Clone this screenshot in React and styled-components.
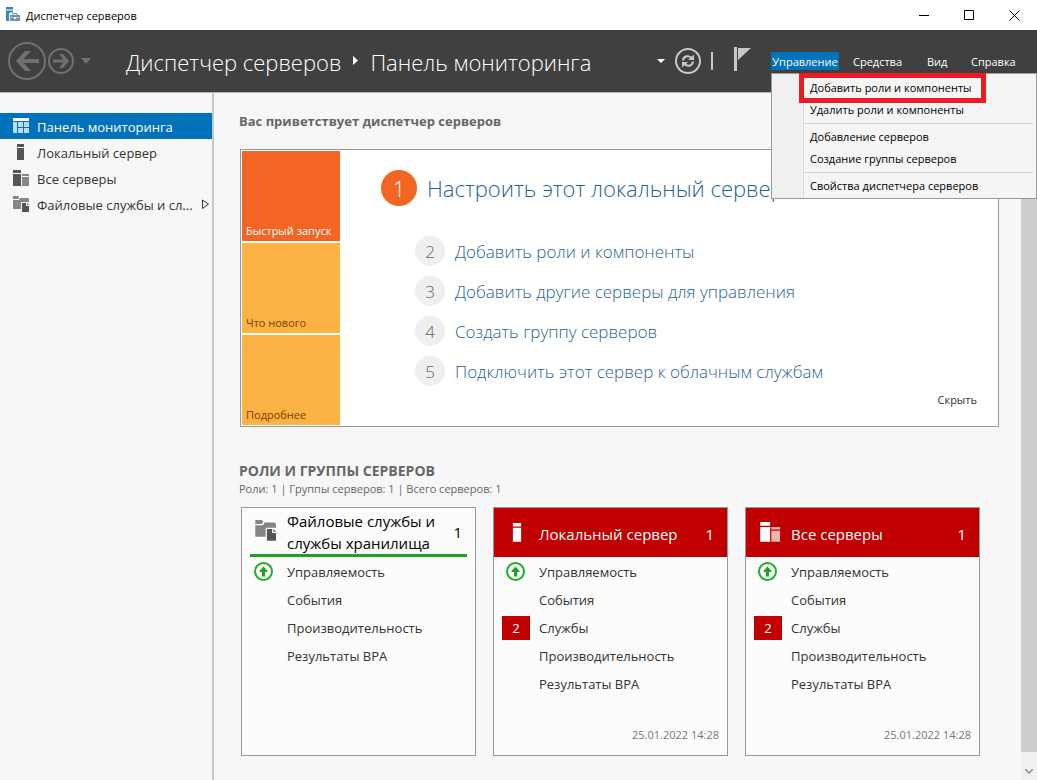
import React, { useState } from 'react';
import styled, { createGlobalStyle, css } from 'styled-components';

const GlobalStyle = createGlobalStyle`
  *, *::before, *::after {
    box-sizing: border-box;
  }

  body {
    margin: 0;
    background: #f7f7f7;
    color: #333;
    font-family: 'Open Sans', 'Noto Sans', sans-serif;
    font-size: 13px;
  }

  button {
    margin: 0;
    padding: 0;
    border: 0;
    background: none;
    color: inherit;
    font: inherit;
    cursor: pointer;
  }

  a {
    color: inherit;
    text-decoration: none;
  }

  h1, h2, h3, p, ul, ol {
    margin: 0;
    padding: 0;
    list-style: none;
    font-size: inherit;
    font-weight: normal;
  }

  svg {
    display: block;
    flex: none;
  }
`;

const Window = styled.div`
  display: flex;
  flex-direction: column;
  min-height: 100vh;
`;

const TitleBar = styled.div`
  display: flex;
  align-items: center;
  height: 30px;
  padding-left: 5px;
  background: #fff;
  color: #000;
  font-size: 11px;
`;

const TitleText = styled.span`
  flex: 1;
  padding-left: 5px;
`;

const WindowButton = styled.button`
  display: flex;
  align-items: center;
  justify-content: center;
  width: 45px;
  height: 28px;
`;

const Header = styled.header`
  display: flex;
  align-items: center;
  height: 63px;
  padding: 0 20px 0 8px;
  background: #404040;
  border-bottom: 1px solid #b5b5b5;
  color: #fff;
`;

const History = styled.div`
  display: flex;
  align-items: center;
  gap: 2px;
  width: 118px;
`;

const HistoryToggle = styled.button`
  padding: 0 5px;
`;

const Crumbs = styled.h1`
  display: flex;
  flex: 1;
  align-items: center;
  gap: 11px;
  padding-top: 2px;
  font-size: 22px;
  font-weight: 300;
  white-space: nowrap;
`;

const HeaderTools = styled.div`
  display: flex;
  align-items: center;
  gap: 10px;
  margin-right: 20px;
`;

const Divider = styled.span`
  width: 2px;
  height: 18px;
  margin-right: 10px;
  background: #c8c8c8;
`;

const MenuBar = styled.nav`
  display: grid;
  grid-template-columns: 82px 74px 44px 46px;
  font-size: 11px;
`;

const MenuGroup = styled.div`
  position: relative;
`;

const MenuButton = styled.button`
  height: 18px;
  line-height: 20px;
  text-align: left;
  white-space: nowrap;

  ${({ $open }) => $open && css`
    width: 68px;
    background: #0072bc;
    text-align: center;
  `}
`;

const Dropdown = styled.ul`
  position: absolute;
  z-index: 2;
  top: 21px;
  left: 0;
  width: 266px;
  padding: 3px 3px 1px 0;
  border: 1px solid #999;
  background: linear-gradient(90deg, #f0f0f0 31px, #d9d9d9 31px, #d9d9d9 32px, #f5f5f5 32px);
  color: #000;
`;

const DropdownItem = styled.li`
  position: relative;
  height: 22px;
  padding-left: 38px;
  line-height: 22px;

  ${({ $marked }) => $marked && css`
    &::after {
      content: '';
      position: absolute;
      z-index: 1;
      top: -4px;
      left: 27px;
      width: 187px;
      height: 30px;
      border: 5px solid #ed1c24;
      pointer-events: none;
    }
  `}
`;

const Separator = styled.li`
  height: 1px;
  margin: 2px 0 2px 33px;
  background: #d4d4d4;
`;

const Body = styled.div`
  display: grid;
  flex: 1;
  grid-template-columns: 214px minmax(0, 1fr) 16px;
`;

const Sidebar = styled.nav`
  padding-top: 20px;
  border-right: 2px solid #c8c8c8;
`;

const SideLink = styled.a`
  display: flex;
  align-items: center;
  gap: 8px;
  height: 26px;
  padding: 0 4px 0 12px;
  background: ${({ $active }) => ($active ? '#0072bc' : 'transparent')};
  color: ${({ $active }) => ($active ? '#fff' : '#333')};
  line-height: 22px;
  white-space: nowrap;
`;

const SideLabel = styled.span`
  flex: 1;
  padding-top: 2px;
`;

const Main = styled.main`
  padding: 16px 22px 24px 25px;
`;

const SectionTitle = styled.h2`
  color: #666;
  font-size: ${({ $large }) => ($large ? 14 : 13)}px;
  font-weight: 700;
  line-height: 24px;
`;

const SectionInfo = styled.p`
  color: #666;
  font-size: 11px;
  line-height: 12px;
`;

const Welcome = styled.section`
  display: flex;
  margin: 16px 0 32px 1px;
  padding: 1px;
  border: 1px solid #999;
  background: #fff;
`;

const Tiles = styled.div`
  display: flex;
  flex-direction: column;
  gap: 2px;
  width: 98px;
`;

const Tile = styled.button`
  display: flex;
  align-items: flex-end;
  height: 90px;
  padding: 0 4px 3px;
  background: ${({ $primary }) => ($primary ? '#f26522' : '#fdb244')};
  color: ${({ $primary }) => ($primary ? '#fff' : '#7a3f00')};
  font-size: 11px;
  white-space: nowrap;
`;

const Steps = styled.div`
  display: flex;
  flex: 1;
  flex-direction: column;
  padding: 19px 20px 16px 41px;
`;

const StepList = styled.ol`
  flex: 1;
  color: #1f6398;
  font-weight: 300;
`;

const Step = styled.li`
  display: flex;
  align-items: center;
  gap: 10px;
  height: 40px;
  padding-left: 34px;
  font-size: 17px;

  ${({ $primary }) => $primary && css`
    height: 36px;
    margin-bottom: 25px;
    padding-left: 0;
    font-size: 22px;
  `}
`;

const StepNumber = styled.span`
  display: flex;
  align-items: center;
  justify-content: center;
  width: ${({ $primary }) => ($primary ? 36 : 30)}px;
  height: ${({ $primary }) => ($primary ? 36 : 30)}px;
  border-radius: 50%;
  background: ${({ $primary }) => ($primary ? '#f26522' : '#efefef')};
  color: ${({ $primary }) => ($primary ? '#fff' : '#666')};
`;

const HideButton = styled.button`
  align-self: flex-end;
  font-size: 11px;
  line-height: 18px;
`;

const Cards = styled.div`
  display: flex;
  flex-wrap: wrap;
  gap: 17px;
  margin: 12px 0 0 2px;
`;

const Card = styled.article`
  display: flex;
  flex-direction: column;
  width: 235px;
  height: 249px;
  border: 1px solid #999;
  background: #fcfcfc;
`;

const CardHeader = styled.header`
  display: grid;
  grid-template-columns: 36px 1fr auto;
  align-items: center;
  height: 49px;
  font-size: 15px;
  line-height: 22px;

  ${({ $alert }) => ($alert
    ? css`
      padding: 2px 13px 0 9px;
      background: #c00000;
      color: #fff;
    `
    : css`
      margin: 0 8px;
      padding: 2px 5px 0 1px;
      border-bottom: 3px solid #21a121;
      color: #000;
    `)}
`;

const CardIcon = styled.span`
  display: flex;
  justify-content: center;
  width: 28px;
  padding-bottom: 2px;
`;

const Status = styled.li`
  display: grid;
  grid-template-columns: 28px 1fr;
  align-items: center;
  gap: 9px;
  height: 28px;
  padding-left: 8px;
`;

const StatusMark = styled.span`
  display: flex;
  align-items: center;
  justify-content: center;
  height: 24px;
`;

const Badge = styled(StatusMark)`
  background: #c00000;
  color: #fff;
`;

const StatusList = styled.ul`
  flex: 1;
  padding-top: 1px;
`;

const CardDate = styled.time`
  padding: 0 8px 11px;
  color: #777;
  font-size: 11px;
  line-height: 18px;
  text-align: right;
`;

const ScrollBar = styled.div`
  display: flex;
  flex-direction: column;
  background: #f0f0f0;
`;

const ScrollThumb = styled.div`
  flex: 1;
  background: #cdcdcd;
`;

const ScrollButton = styled.button`
  display: flex;
  align-items: center;
  justify-content: center;
  height: 28px;
  padding-top: 10px;
`;

const AppIcon = () => (
  <svg width="16" height="16" viewBox="0 0 16 16">
    <path d="M1 0h7v2.500H1zM1 3.500h7v2H5V14H1z" fill="#2e8bbd" />
    <path d="M4 6h12v9H4z" fill="#fff" />
    <path d="M8 8V6.500h4V8" fill="none" stroke="#6f93a5" strokeWidth="1" />
    <path d="M5 8h10v2.500H5zM5 11h10v3H5z" fill="#6f93a5" />
    <path d="M9 10h2v2H9z" fill="#fff" />
  </svg>
);

const BackIcon = () => (
  <svg width="38" height="38" viewBox="0 0 38 38">
    <circle cx="19" cy="19" r="18" fill="none" stroke="#707070" strokeWidth="2" />
    <path d="M8 19L17 9h6l-7.500 8H31v4H15.500L23 29h-6z" fill="#707070" />
  </svg>
);

const ForwardIcon = () => (
  <svg width="26" height="26" viewBox="0 0 26 26">
    <circle cx="13" cy="13" r="12" fill="none" stroke="#707070" strokeWidth="2" />
    <path d="M21 13l-6-7h-4l4.500 5.500H5v3h10.500L11 20h4z" fill="#707070" />
  </svg>
);

const Caret = ({ width = 8, height = 4, color = '#fff' }) => (
  <svg width={width} height={height} viewBox="0 0 10 6" preserveAspectRatio="none">
    <path d="M0 0h10L5 6z" fill={color} />
  </svg>
);

const CrumbArrow = () => (
  <svg width="7" height="12" viewBox="0 0 7 12">
    <path d="M1 0l5 4.500L1 9z" fill="#fff" />
  </svg>
);

const RefreshIcon = () => (
  <svg width="26" height="26" viewBox="0 0 26 26">
    <circle cx="13" cy="13" r="12" fill="none" stroke="#c8c8c8" strokeWidth="2" />
    <path d="M8 12.500C8.500 8 13.500 7 16.500 10M18 13.500C17.500 18 12.500 19 9.500 16" fill="none" stroke="#c8c8c8" strokeWidth="2.200" />
    <path d="M19 6.500V12h-6zM7 19.500V14h6z" fill="#c8c8c8" />
  </svg>
);

const FlagIcon = () => (
  <svg width="18" height="30" viewBox="0 0 18 30">
    <path d="M1 1h3v24H1zM5 2h13L5 14z" fill="#c8c8c8" />
  </svg>
);

const DashboardIcon = () => (
  <svg width="17" height="17" viewBox="0 0 17 17">
    <path d="M1 0h16v3H1z" fill="#fff" />
    <path d="M1 4h4v11H1zM6 4h5v5H6zM6 10h5v5H6zM12 4h5v5h-5zM12 10h5v5h-5z" fill="#b9dcf3" />
  </svg>
);

const ServerIcon = ({ color = '#555', size = 17 }) => (
  <svg width={size} height={size} viewBox="0 0 17 17">
    <path d="M5 0h7v3H5zM5 4h7v12H5z" fill={color} />
  </svg>
);

const ServersIcon = ({ color = '#555', second = '#858585', size = 17 }) => (
  <svg width={size} height={size} viewBox="0 0 17 17">
    <path d="M1 0h8v3H1zM1 4h8v12H1z" fill={color} />
    <path d="M10 4h7v2h-7zM10 7h7v9h-7z" fill={second} />
  </svg>
);

const FilesIcon = ({ size = 17 }) => (
  <svg width={size} height={size} viewBox="0 0 17 17">
    <path d="M1 0h5l1 1v1L6 3H1zM1 4h6l1-2h8l1 1v3H9v7H1z" fill="#858585" />
    <path d="M10 7h4v3h3v6h-7zM15 7l2 2h-2z" fill="#555" />
  </svg>
);

const ExpandIcon = () => (
  <svg width="9" height="11" viewBox="0 0 9 11">
    <path d="M1.500 1v8.500L7.500 5.200z" fill="none" stroke="#333" />
  </svg>
);

const OnlineIcon = () => (
  <svg width="20" height="20" viewBox="0 0 20 20">
    <circle cx="9.500" cy="9.500" r="8.500" fill="none" stroke="#21b02a" strokeWidth="2" />
    <path d="M9.500 4.500l4 4.500v1H11v4.500H8V10H5.500V9z" fill="#21a121" />
  </svg>
);

const menuItems = [
  ['Добавить роли и компоненты', 'Удалить роли и компоненты'],
  ['Добавление серверов', 'Создание группы серверов'],
  ['Свойства диспетчера серверов'],
];

const sideItems = [
  { label: 'Панель мониторинга', icon: <DashboardIcon />, active: true },
  { label: 'Локальный сервер', icon: <ServerIcon /> },
  { label: 'Все серверы', icon: <ServersIcon /> },
  { label: 'Файловые службы и сл...', icon: <FilesIcon />, nested: true },
];

const steps = [
  'Настроить этот локальный сервер',
  'Добавить роли и компоненты',
  'Добавить другие серверы для управления',
  'Создать группу серверов',
  'Подключить этот сервер к облачным службам',
];

const cards = [
  {
    title: 'Файловые службы и службы хранилища',
    icon: <FilesIcon size={22} />,
    rows: ['Управляемость', 'События', 'Производительность', 'Результаты BPA'],
  },
  {
    title: 'Локальный сервер',
    icon: <ServerIcon color="#fff" size={20} />,
    alert: true,
    rows: ['Управляемость', 'События', 'Службы', 'Производительность', 'Результаты BPA'],
    date: '25.01.2022 14:28',
  },
  {
    title: 'Все серверы',
    icon: <ServersIcon color="#fff" second="#f0b4b4" size={21} />,
    alert: true,
    rows: ['Управляемость', 'События', 'Службы', 'Производительность', 'Результаты BPA'],
    date: '25.01.2022 14:28',
  },
];

const ManageMenu = () => {
  const [open, setOpen] = useState(true);

  return (
    <MenuGroup>
      <MenuButton $open={open} aria-expanded={open} onClick={() => setOpen(!open)}>
        Управление
      </MenuButton>
      {open && (
        <Dropdown>
          {menuItems.map((group, i) => (
            <React.Fragment key={group[0]}>
              {i > 0 && <Separator />}
              {group.map((item, j) => (
                <DropdownItem key={item} $marked={i === 0 && j === 0}>
                  <button>{item}</button>
                </DropdownItem>
              ))}
            </React.Fragment>
          ))}
        </Dropdown>
      )}
    </MenuGroup>
  );
};

const RoleCard = ({ title, icon, alert, rows, date }) => (
  <Card>
    <CardHeader $alert={alert}>
      <CardIcon>{icon}</CardIcon>
      <h3>{title}</h3>
      <span>1</span>
    </CardHeader>
    <StatusList>
      {rows.map((row) => (
        <Status key={row}>
          {row === 'Службы' ? (
            <Badge>2</Badge>
          ) : (
            <StatusMark>{row === 'Управляемость' && <OnlineIcon />}</StatusMark>
          )}
          <a href="#">{row}</a>
        </Status>
      ))}
    </StatusList>
    {date && <CardDate>{date}</CardDate>}
  </Card>
);

const App = () => (
  <Window>
    <GlobalStyle />
    <TitleBar>
      <AppIcon />
      <TitleText>Диспетчер серверов</TitleText>
      <WindowButton aria-label="Свернуть">
        <svg width="11" height="11"><path d="M0 5.500h10" stroke="#000" /></svg>
      </WindowButton>
      <WindowButton aria-label="Развернуть">
        <svg width="11" height="11"><path d="M.5.5h9v9h-9z" fill="none" stroke="#000" /></svg>
      </WindowButton>
      <WindowButton aria-label="Закрыть">
        <svg width="11" height="11"><path d="M.5.5l10 10M10.500.5l-10 10" stroke="#000" /></svg>
      </WindowButton>
    </TitleBar>
    <Header>
      <History>
        <button aria-label="Назад"><BackIcon /></button>
        <button aria-label="Вперед"><ForwardIcon /></button>
        <HistoryToggle aria-label="Журнал"><Caret width={10} height={6} color="#707070" /></HistoryToggle>
      </History>
      <Crumbs>
        <span>Диспетчер серверов</span>
        <CrumbArrow />
        <span>Панель мониторинга</span>
      </Crumbs>
      <HeaderTools>
        <Caret />
        <button aria-label="Обновить"><RefreshIcon /></button>
        <Divider />
        <button aria-label="Уведомления"><FlagIcon /></button>
      </HeaderTools>
      <MenuBar>
        <ManageMenu />
        <MenuButton>Средства</MenuButton>
        <MenuButton>Вид</MenuButton>
        <MenuButton>Справка</MenuButton>
      </MenuBar>
    </Header>
    <Body>
      <Sidebar>
        {sideItems.map(({ label, icon, active, nested }) => (
          <SideLink key={label} href="#" $active={active}>
            {icon}
            <SideLabel>{label}</SideLabel>
            {nested && <ExpandIcon />}
          </SideLink>
        ))}
      </Sidebar>
      <Main>
        <SectionTitle>Вас приветствует диспетчер серверов</SectionTitle>
        <Welcome>
          <Tiles>
            <Tile $primary>Быстрый запуск</Tile>
            <Tile>Что нового</Tile>
            <Tile>Подробнее</Tile>
          </Tiles>
          <Steps>
            <StepList>
              {steps.map((step, i) => (
                <Step key={step} $primary={i === 0}>
                  <StepNumber $primary={i === 0}>{i + 1}</StepNumber>
                  <a href="#">{step}</a>
                </Step>
              ))}
            </StepList>
            <HideButton>Скрыть</HideButton>
          </Steps>
        </Welcome>
        <SectionTitle $large>РОЛИ И ГРУППЫ СЕРВЕРОВ</SectionTitle>
        <SectionInfo>Роли: 1 | Группы серверов: 1 | Всего серверов: 1</SectionInfo>
        <Cards>
          {cards.map((card) => (
            <RoleCard key={card.title} {...card} />
          ))}
        </Cards>
      </Main>
      <ScrollBar>
        <ScrollThumb />
        <ScrollButton aria-label="Прокрутить вниз">
          <svg width="8" height="5"><path d="M0 0l4 4 4-4" fill="none" stroke="#888" strokeWidth="1.500" /></svg>
        </ScrollButton>
      </ScrollBar>
    </Body>
  </Window>
);

export default App;
